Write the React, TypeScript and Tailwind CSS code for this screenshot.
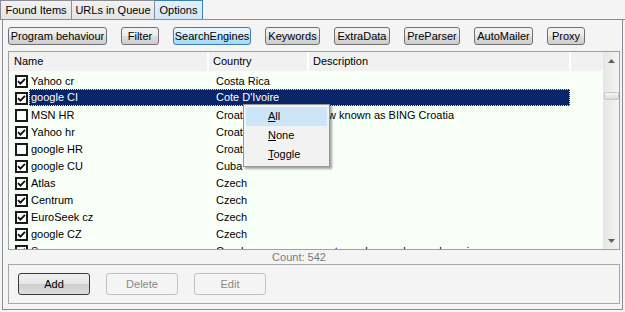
import { useState } from 'react';

type Row = { name: string; country: string; desc?: string; checked: boolean };

const rows: Row[] = [
  { name: 'Yahoo cr', country: 'Costa Rica', checked: true },
  { name: 'google CI', country: "Cote D'Ivoire", checked: true },
  { name: 'MSN HR', country: 'Croatia', desc: 'Now known as BING Croatia', checked: false },
  { name: 'Yahoo hr', country: 'Croatia', checked: true },
  { name: 'google HR', country: 'Croatia', checked: false },
  { name: 'google CU', country: 'Cuba', checked: true },
  { name: 'Atlas', country: 'Czech', checked: true },
  { name: 'Centrum', country: 'Czech', checked: true },
  { name: 'EuroSeek cz', country: 'Czech', checked: true },
  { name: 'google CZ', country: 'Czech', checked: true },
  { name: 'Seznam', country: 'Czech', desc: 'most popular czech search engine', checked: true },
];

const toolButtons = [
  { label: 'Program behaviour', w: 'w-[99px]' },
  { label: 'Filter', w: 'w-[38px]' },
  { label: 'SearchEngines', w: 'w-[78px]', active: true },
  { label: 'Keywords', w: 'w-[55px]' },
  { label: 'ExtraData', w: 'w-[56px]' },
  { label: 'PreParser', w: 'w-[56px]' },
  { label: 'AutoMailer', w: 'w-[59px]' },
  { label: 'Proxy', w: 'w-[38px]' },
];

function CheckBox({ checked }: { checked: boolean }) {
  return (
    <div className="w-[13px] h-[13px] border-2 border-[#1a1a1a] bg-white flex items-center justify-center shrink-0">
      {checked && (
        <svg width="9" height="9" viewBox="0 0 9 9">
          <path d="M1 4.2 L3.4 6.6 L8 1.8" stroke="#111" strokeWidth="1.9" fill="none" />
        </svg>
      )}
    </div>
  );
}

function ToolButton({ label, w, active }: { label: string; w: string; active?: boolean }) {
  return (
    <div
      className={
        active
          ? `${w} h-[18px] rounded-[3px] border border-[#3c7fb1] bg-[linear-gradient(to_bottom,#eaf6fd_0%,#d9f0fc_50%,#bee6fd_51%,#a7d9f5_100%)] flex items-center justify-center`
          : `${w} h-[18px] rounded-[3px] border border-[#707070] bg-[linear-gradient(to_bottom,#f2f2f2_0%,#ebebeb_50%,#dddddd_51%,#cfcfcf_100%)] flex items-center justify-center`
      }
    >
      {label}
    </div>
  );
}

function App() {
  const [sel] = useState(1);

  return (
    <div className="relative w-[625px] h-[312px] bg-[#f4f4f4] overflow-hidden text-[11px] leading-none text-black font-['Liberation_Sans',Arial,sans-serif]">
      {/* tabs */}
      <div className="flex h-[20px] items-end border-b border-[#898c95]">
        <div className="w-[72px] h-[19px] border border-b-0 border-[#898c95] bg-[linear-gradient(to_bottom,#f2f2f2,#e3e3e3)] flex items-center justify-center pt-[1px]">
          Found Items
        </div>
        <div className="w-[83px] h-[19px] border border-b-0 border-l-0 border-[#898c95] bg-[linear-gradient(to_bottom,#f2f2f2,#e3e3e3)] flex items-center justify-center pt-[1px]">
          URLs in Queue
        </div>
        <div className="w-[48px] h-[19px] border border-b-0 border-l-0 border-[#3c7fb1] bg-[linear-gradient(to_bottom,#e3f1fc,#cfe6f8)] flex items-center justify-center pt-[1px]">
          Options
        </div>
      </div>

      {/* panel */}
      <div className="ml-[2px] w-[621px] h-[290px] border border-t-0 border-[#898c95] bg-[#f4f4f4] pl-[5px]">
        <div className="flex gap-[14px] pt-[7px]">
          {toolButtons.map((b) => (
            <ToolButton key={b.label} {...b} />
          ))}
        </div>

        {/* list */}
        <div className="mt-[6px] w-[612px] h-[199px] border border-[#a0a0a0] flex bg-[#f7fff7]">
          <div className="flex-1 flex flex-col overflow-hidden">
            <div className="h-[19px] bg-[#f1f1f1] flex items-center shrink-0">
              <div className="w-[200px] pl-[5px] border-r-2 border-white h-full flex items-center">Name</div>
              <div className="w-[100px] pl-[4px] border-r-2 border-white h-full flex items-center">Country</div>
              <div className="w-[262px] pl-[4px] border-r-2 border-white h-full flex items-center">Description</div>
              <div className="flex-1" />
            </div>
            <div className="pt-[2px] flex-1 overflow-hidden">
              {rows.map((r, i) => (
                <div key={r.name} className="h-[17px] flex items-center">
                  <div className="w-[200px] flex items-center pl-[6px] h-full">
                    <CheckBox checked={r.checked} />
                    <span className={i === sel ? 'ml-[1px] pl-[2px] h-full flex items-center' : 'ml-[3px]'}>
                      {i === sel ? '' : r.name}
                    </span>
                  </div>
                  {i === sel ? null : (
                    <>
                      <div className="w-[100px] pl-[7px]">{r.country}</div>
                      <div className="w-[262px] pl-[5px] whitespace-nowrap">{r.desc ?? ''}</div>
                    </>
                  )}
                </div>
              ))}
            </div>
          </div>
          {/* scrollbar */}
          <div className="w-[16px] bg-[linear-gradient(to_right,#e6e6e6,#f4f4f4)] flex flex-col items-center">
            <div className="h-[17px] flex items-center justify-center">
              <svg width="7" height="4" viewBox="0 0 7 4">
                <path d="M0 4 L3.5 0 L7 4 Z" fill="#606060" />
              </svg>
            </div>
            <div className="mt-[23px] w-[15px] h-[8px] border border-[#c8c8c8] bg-[linear-gradient(to_bottom,#f6f6f6,#dcdcdc)] rounded-[1px]" />
            <div className="flex-1" />
            <div className="h-[17px] flex items-center justify-center">
              <svg width="7" height="4" viewBox="0 0 7 4">
                <path d="M0 0 L3.5 4 L7 0 Z" fill="#606060" />
              </svg>
            </div>
          </div>
        </div>

        {/* count */}
        <div className="w-[612px] h-[14px] flex items-center justify-center pr-[30px] text-[#7a7a7a]">Count: 542</div>

        {/* bottom group */}
        <div className="w-[612px] h-[40px] border border-[#a8a8a8] flex items-start gap-[16px] pl-[9px] pt-[8px]">
          <div className="w-[72px] h-[22px] rounded-[3px] border border-[#3a3a3a] bg-[linear-gradient(to_bottom,#f0f0f0_0%,#e6e6e6_50%,#cdcdcd_51%,#dedede_100%)] flex items-center justify-center">
            Add
          </div>
          <div className="w-[72px] h-[22px] rounded-[3px] border border-[#c2c2c2] bg-[#f4f4f4] text-[#8a8a8a] flex items-center justify-center">
            Delete
          </div>
          <div className="w-[72px] h-[22px] rounded-[3px] border border-[#c2c2c2] bg-[#f4f4f4] text-[#8a8a8a] flex items-center justify-center">
            Edit
          </div>
        </div>
      </div>

      {/* selected row highlight */}
      <div className="absolute left-[29px] top-[89px] w-[541px] h-[17px] bg-[#0a246a] border border-dotted border-[#e8e8a0] text-white flex items-center">
        <span className="w-[184px] pl-[1px]">google CI</span>
        <span className="pl-[2px]">Cote D'Ivoire</span>
      </div>

      {/* context menu */}
      <div className="absolute left-[243px] top-[104px] w-[87px] h-[63px] bg-[#f2f2f2] border border-[#979797] shadow-[2px_2px_2px_rgba(0,0,0,0.35)] p-[2px] flex flex-col">
        <div className="h-[19px] bg-[#cde6f7] flex items-center pl-[22px]">
          <span><u>A</u>ll</span>
        </div>
        <div className="h-[19px] flex items-center pl-[22px]">
          <span><u>N</u>one</span>
        </div>
        <div className="h-[19px] flex items-center pl-[22px]">
          <span><u>T</u>oggle</span>
        </div>
      </div>
    </div>
  );
}

export default App;
